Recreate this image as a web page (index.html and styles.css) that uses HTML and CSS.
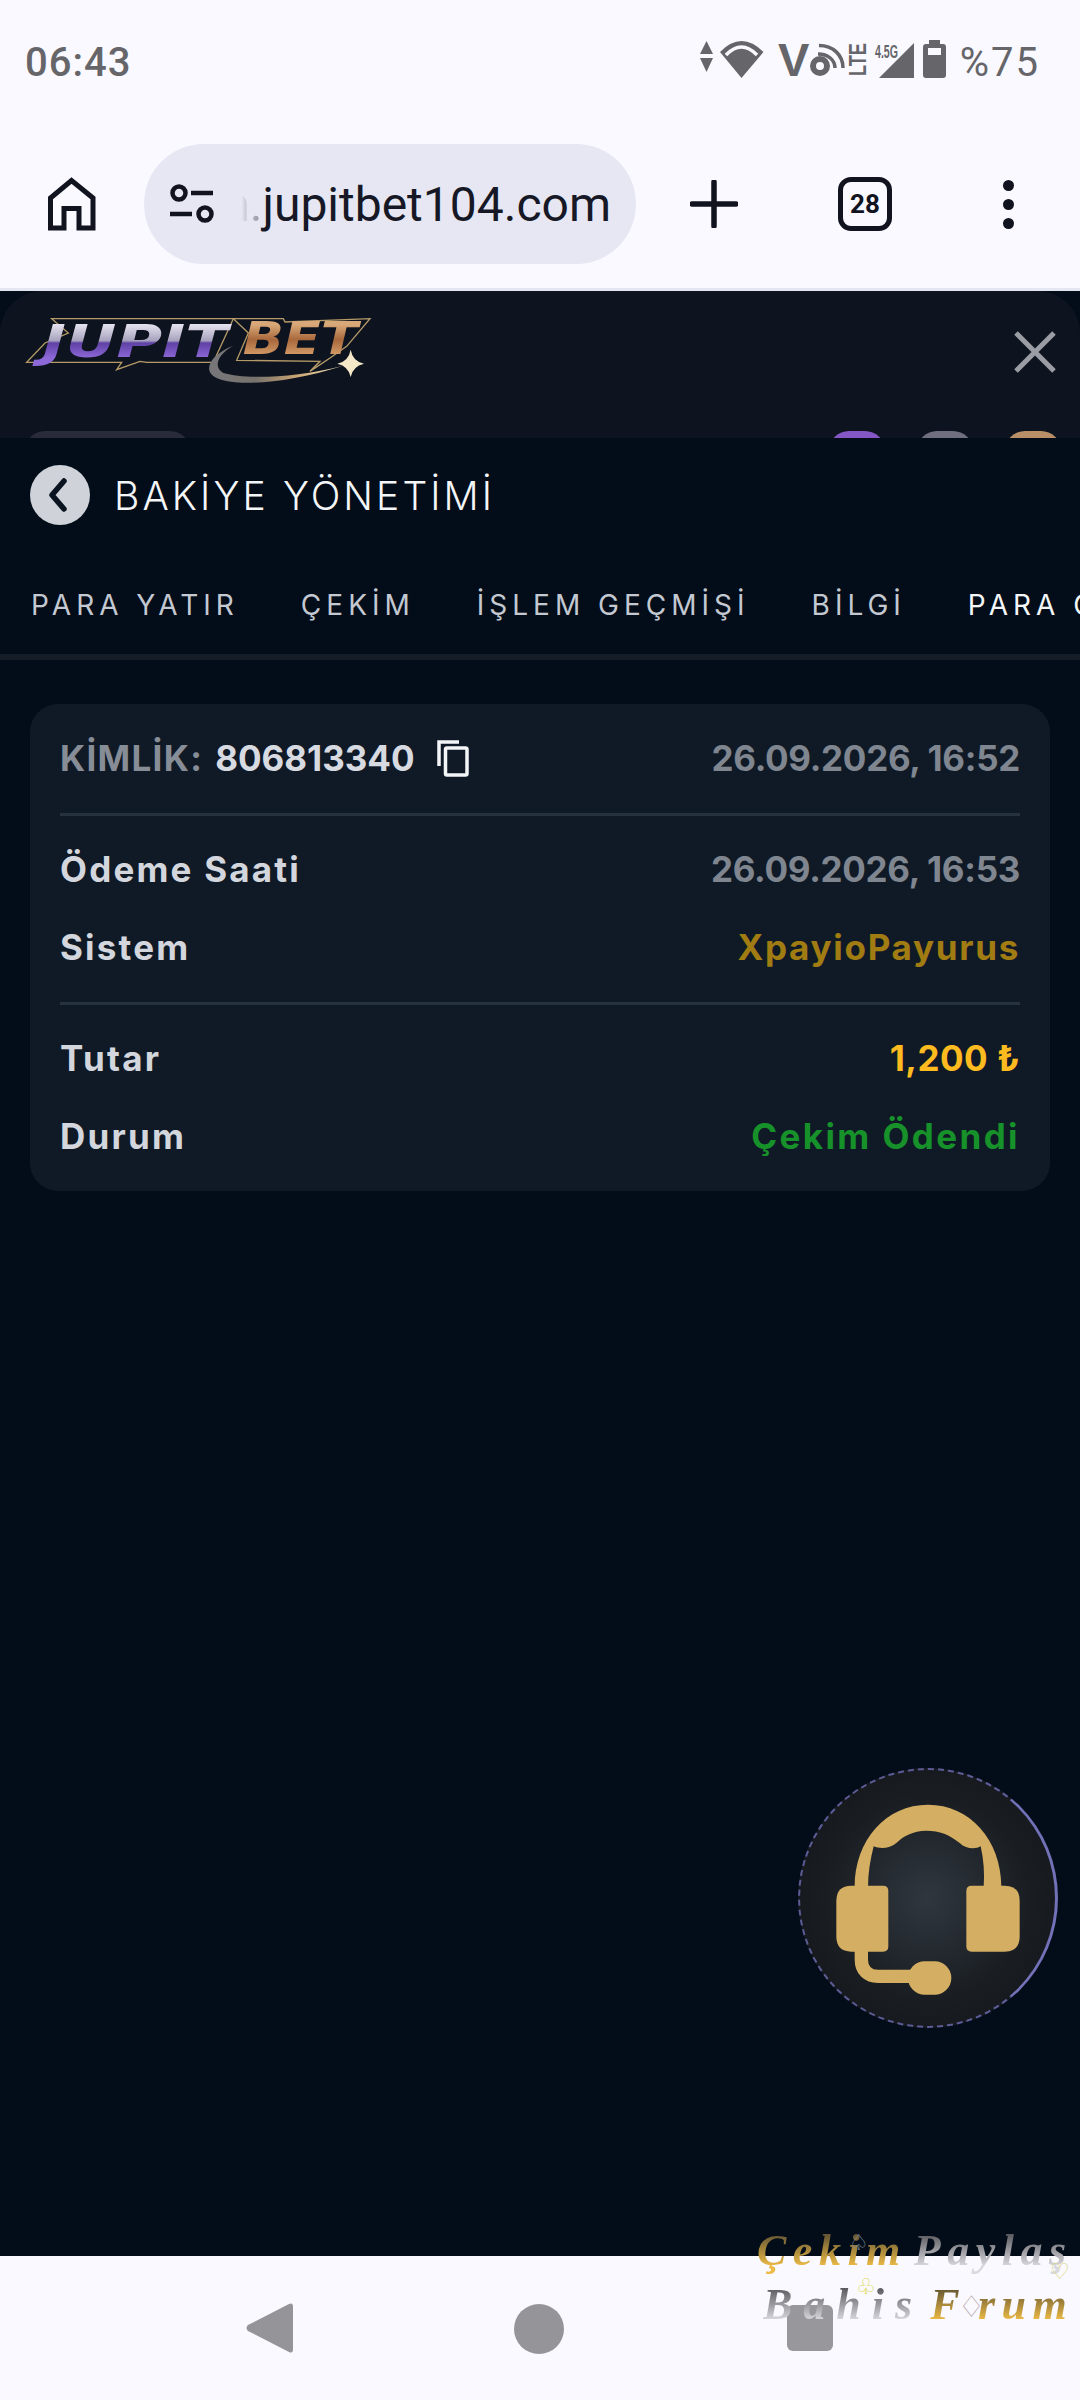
FILE: index.html
```html
<!DOCTYPE html>
<html lang="tr">
<head>
<meta charset="utf-8">
<title>Bakiye Yönetimi</title>
<link rel="stylesheet" href="styles.css">
</head>
<body>

<!-- android status bar -->
<div class="status">
	<span class="time">06:43</span>
	<div class="status-right">
		<svg class="status-icons" width="250" height="46" viewBox="701 36 250 46">
			<polygon points="707.5,41 714,54 701,54"/>
			<polygon points="701,58 714,58 707.5,72"/>
			<path d="M742.5 78L721 52Q742.5 30 764.5 52Z"/>
			<path d="M727 55Q742.5 39 758 55" class="cut"/>
			<text x="779" y="76" class="t-v">V</text>
			<circle cx="821" cy="66" r="7" class="ring"/>
			<path d="M820 45.500C834 45.500 844 55 844 68" class="wave"/>
			<path d="M819 54C829 54 836 60 836 68" class="wave"/>
			<text x="867" y="76" class="t-lte" textLength="33" lengthAdjust="spacingAndGlyphs" transform="rotate(-90 867 76)">LTE</text>
			<text x="876" y="58" class="t-g" textLength="23" lengthAdjust="spacingAndGlyphs">4.5G</text>
			<polygon points="880,78 915,43 915,78"/>
			<path d="M930 44V40H941V44H944Q947 44 947 47V75Q947 78 944 78H927Q924 78 924 75V47Q924 44 927 44Z"/>
			<rect x="929" y="48" width="13" height="7" class="fill-cut"/>
		</svg>
		<span class="batt">%75</span>
	</div>
</div>

<!-- browser toolbar -->
<div class="toolbar">
	<svg class="home" width="48" height="54" viewBox="48 178 48 54">
		<path d="M50.500 229V199L71.500 181.500L93 199V229H79V209.500H64V229Z"/>
	</svg>
	<div class="urlbar">
		<svg class="tune" width="46" height="40" viewBox="169 184 46 40">
			<circle cx="179" cy="193" r="6.500"/>
			<path d="M191 193H213M170 214H192"/>
			<circle cx="205" cy="214" r="6.500"/>
		</svg>
		<span class="url"><span class="url-fade">m.</span>jupitbet104.com</span>
	</div>
	<svg class="plus" width="48" height="48" viewBox="0 0 48 48">
		<path d="M24 2V46M2 24H46"/>
	</svg>
	<div class="tabcount">28</div>
	<div class="dots"><i></i><i></i><i></i></div>
</div>

<div class="page">
	<!-- site header, mostly covered by the panel -->
	<div class="site-head">
		<div class="logo-row">
			<svg class="logo" width="350" height="74" viewBox="72 70 1050 222">
				<defs>
					<linearGradient id="gp" gradientUnits="userSpaceOnUse" x1="0" y1="105" x2="0" y2="205">
						<stop offset="0" stop-color="#e4e1ee"/>
						<stop offset=".48" stop-color="#a7a2bd"/>
						<stop offset=".55" stop-color="#5f42a5"/>
						<stop offset="1" stop-color="#8d68d8"/>
					</linearGradient>
					<linearGradient id="gb" gradientUnits="userSpaceOnUse" x1="0" y1="105" x2="0" y2="195">
						<stop offset="0" stop-color="#d9a878"/>
						<stop offset=".5" stop-color="#a8683c"/>
						<stop offset="1" stop-color="#d29a66"/>
					</linearGradient>
					<linearGradient id="gs" x1="0" y1="0" x2="1" y2="0">
						<stop offset="0" stop-color="#77767a"/>
						<stop offset=".35" stop-color="#77726c"/>
						<stop offset=".65" stop-color="#c9a474"/>
						<stop offset="1" stop-color="#f5e5b8"/>
					</linearGradient>
				</defs>
				<path class="logo-line" d="M155 87H700L640 218H440L420 215L350 240L365 218H80L135 160L205 130Z"/>
				<path class="logo-line" d="M700 87H850L855 97L1110 87L1040 170L990 205L930 245L960 215L710 212L745 130Z"/>
				<text x="128" y="203" class="logo-t" fill="url(#gp)" textLength="555" lengthAdjust="spacingAndGlyphs">JUPIT</text>
				<text x="728" y="193" class="logo-t" fill="url(#gb)" textLength="345" lengthAdjust="spacingAndGlyphs">BET</text>
				<path fill="url(#gs)" d="M700 168C640 190 600 240 650 265C700 290 850 285 1030 228C880 265 740 270 670 250C640 235 650 195 700 168Z"/>
				<path fill="#f5e8c8" d="M1052 180Q1058 215 1092 222Q1058 230 1052 262Q1046 230 1012 222Q1046 215 1052 180Z"/>
			</svg>
			<svg class="close" width="42" height="42" viewBox="0 0 42 42">
				<path d="M2 2L40 40M40 2L2 40"/>
			</svg>
		</div>
		<div class="peek">
			<span class="peek-pill"></span>
			<span class="peek-dots">
				<span class="peek-dot purple"></span>
				<span class="peek-dot grey"></span>
				<span class="peek-dot tan"></span>
			</span>
		</div>
	</div>

	<div class="panel-head">
		<span class="back">
			<svg width="22" height="34" viewBox="0 0 22 34"><path d="M17 3L5 17L17 31"/></svg>
		</span>
		<span class="panel-title">BAKİYE YÖNETİMİ</span>
	</div>

	<div class="tabs">
		<span class="tab">PARA YATIR</span>
		<span class="tab">ÇEKİM</span>
		<span class="tab">İŞLEM GEÇMİŞİ</span>
		<span class="tab">BİLGİ</span>
		<span class="tab active">PARA ÇEKME</span>
	</div>

	<div class="card">
		<div class="row">
			<span class="kimlik">
				<span class="muted">KİMLİK:</span>
				<span class="id">806813340</span>
				<svg class="copy" width="32" height="37" viewBox="436 741 32 37">
					<path d="M438 767V743H458"/>
					<rect x="444.500" y="749" width="21.500" height="27" rx="1.500"/>
				</svg>
			</span>
			<span class="date">26.09.2026, 16:52</span>
		</div>
		<hr>
		<div class="row">
			<span class="label">Ödeme Saati</span>
			<span class="date">26.09.2026, 16:53</span>
		</div>
		<div class="row">
			<span class="label">Sistem</span>
			<span class="system">XpayioPayurus</span>
		</div>
		<hr>
		<div class="row">
			<span class="label">Tutar</span>
			<span class="amount">1,200 ₺</span>
		</div>
		<div class="row">
			<span class="label">Durum</span>
			<span class="paid">Çekim Ödendi</span>
		</div>
	</div>

	<div class="support">
		<svg width="260" height="260" viewBox="55 55 780 780">
			<path d="M225 412C225 270 320 165 445 165C570 165 665 270 665 412H612C615 370 612 330 603 290C590 298 560 300 540 280C510 255 480 243 440 243C400 243 370 260 350 280C330 298 300 298 282 290C272 330 265 370 265 412Z"/>
			<path d="M215 408H310Q326 408 326 424V590Q326 606 310 606H215Q170 606 170 560V454Q170 408 215 408Z"/>
			<path d="M576 408H675Q720 408 720 454V560Q720 606 675 606H576Q560 606 560 590V424Q560 408 576 408Z"/>
			<path class="mic-arm" d="M245 600V630C245 662 265 680 295 680H400"/>
			<rect x="385" y="635" width="130" height="100" rx="50"/>
		</svg>
	</div>
</div>

<!-- android nav bar -->
<div class="navbar">
	<svg class="nav-back" width="48" height="56" viewBox="0 0 48 56">
		<path d="M44 4Q48 2 48 7V49Q48 54 44 52L3 31Q0 28 3 25Z"/>
	</svg>
	<span class="nav-home"></span>
	<span class="nav-recent"></span>
</div>

<!-- forum watermark over the corner -->
<div class="mark">
	<div class="mark-line first"><span class="gold">Çekim</span><span class="silver">Paylaş</span></div>
	<div class="mark-line second"><span class="silver">Bahis</span><span class="gold">F</span><span class="suit diamond">♢</span><span class="gold">rum</span></div>
	<span class="suit spade">♤</span>
	<span class="suit heart">♡</span>
	<span class="suit club">♧</span>
</div>

</body>
</html>
```

FILE: styles.css
```css
body {
	margin: 0;
	width: 1080px;
	height: 2400px;
	position: relative;
	overflow: hidden;
	display: flex;
	flex-direction: column;
	background: #f9f9ff;
	font-family: Inter, "Liberation Sans", sans-serif;
}
/* status bar */
.status {
	height: 120px;
	flex: none;
	padding: 0 40px 0 25px;
	box-sizing: border-box;
	display: flex;
	justify-content: space-between;
	align-items: flex-start;
	color: #66666a;
	font-family: Roboto, sans-serif;
	font-weight: 500;
	font-size: 40px;
}
.time {
	margin-top: 39px;
	line-height: 47px;
	letter-spacing: 1px;
}
.status-right {
	display: flex;
	margin-top: 36px;
}
.status-icons {
	fill: #66666a;
}
.status-icons .cut {
	fill: none;
	stroke: #f9f9ff;
	stroke-width: 3.5;
}
.status-icons .fill-cut {
	fill: #f9f9ff;
}
.status-icons .ring {
	fill: none;
	stroke: #66666a;
	stroke-width: 6;
}
.status-icons .wave {
	fill: none;
	stroke: #66666a;
	stroke-width: 3.5;
}
.t-v {
	font: 700 47px "Liberation Sans", sans-serif;
}
.t-lte {
	font: 700 23px "Liberation Sans", sans-serif;
}
.t-g {
	font: 700 19px "Liberation Sans", sans-serif;
}
.batt {
	margin: 4px 0 0 10px;
	line-height: 46px;
	letter-spacing: 2px;
	font-weight: 400;
}
/* browser toolbar */
.toolbar {
	height: 171px;
	flex: none;
	box-sizing: border-box;
	border-bottom: 3px solid #e4e6f2;
	padding-left: 48px;
	display: flex;
	align-items: center;
}
.home {
	fill: none;
	stroke: #11131f;
	stroke-width: 5;
}
.urlbar {
	width: 492px;
	height: 120px;
	margin-left: 48px;
	border-radius: 60px;
	background: #e6e7f3;
	display: flex;
	align-items: center;
	position: relative;
	overflow: hidden;
}
.tune {
	margin-left: 25px;
	flex: none;
	fill: none;
	stroke: #11131f;
	stroke-width: 4.500;
}
.url {
	position: absolute;
	right: 25px;
	white-space: nowrap;
	font-family: Roboto, sans-serif;
	font-size: 48px;
	color: #161826;
}
.url-fade {
	background-image: linear-gradient(90deg, transparent 62%, #c4c5d2 72%, #8d8e9e 100%);
	-webkit-background-clip: text;
	background-clip: text;
	color: transparent;
}
.plus {
	margin-left: 54px;
	fill: none;
	stroke: #11131f;
	stroke-width: 5.500;
	stroke-linecap: round;
}
.tabcount {
	width: 54px;
	height: 54px;
	margin-left: 100px;
	box-sizing: border-box;
	border: 5px solid #11131f;
	border-radius: 13px;
	display: flex;
	align-items: center;
	justify-content: center;
	font-family: Roboto, sans-serif;
	font-weight: 700;
	font-size: 26px;
	color: #11131f;
}
.dots {
	margin-left: 111px;
	display: flex;
	flex-direction: column;
	gap: 8px;
}
.dots i {
	display: block;
	width: 11px;
	height: 11px;
	border-radius: 50%;
	background: #11131f;
}
/* page */
.page {
	flex: 1;
	position: relative;
	background: #020d19;
}
.site-head {
	height: 147px;
	box-sizing: border-box;
	border-radius: 42px 42px 0 0;
	background: #0e141f;
	display: flex;
	flex-direction: column;
	justify-content: space-between;
	overflow: hidden;
}
.logo-row {
	display: flex;
	justify-content: space-between;
	padding: 22px 24px 0 24px;
}
.logo-line {
	fill: none;
	stroke: #b59a68;
	stroke-width: 4;
}
.logo-t {
	font: italic 700 132px "DejaVu Sans", sans-serif;
}
.close {
	margin-top: 18px;
	fill: none;
	stroke: #9a9da4;
	stroke-width: 5;
}
.peek {
	height: 7px;
	overflow: hidden;
	display: flex;
	justify-content: space-between;
	padding: 0 19px 0 25px;
}
.peek-pill {
	width: 165px;
	height: 40px;
	border-radius: 20px;
	background: #2a2b38;
}
.peek-dots {
	display: flex;
	gap: 32px;
}
.peek-dot {
	width: 56px;
	height: 56px;
	border-radius: 20px;
}
.purple { background: #8457c4; }
.grey { background: #6f6f80; }
.tan { background: #b98f68; }
.panel-head {
	height: 114px;
	display: flex;
	align-items: center;
	padding-left: 30px;
}
.back {
	width: 60px;
	height: 60px;
	border-radius: 50%;
	background: #cfd2d8;
	display: flex;
	align-items: center;
	justify-content: center;
}
.back svg {
	margin-right: 5px;
	fill: none;
	stroke: #0a1320;
	stroke-width: 5.500;
	stroke-linecap: round;
	stroke-linejoin: round;
}
.panel-title {
	margin-left: 24px;
	font-size: 39px;
	letter-spacing: 3.100px;
	font-weight: 300;
	color: #f4f5f7;
}
.tabs {
	height: 108px;
	box-sizing: border-box;
	border-bottom: 6px solid #141c28;
	display: flex;
	overflow: hidden;
}
.tab {
	flex: none;
	height: 102px;
	box-sizing: border-box;
	padding: 4px 31px 0;
	display: flex;
	align-items: center;
	font-size: 28px;
	font-weight: 400;
	letter-spacing: 5px;
	color: #c3c8d1;
}
.tab.active {
	height: 108px;
	padding-bottom: 0;
	border-bottom: 6px solid #7a4fc0;
	color: #f4f5f7;
}
/* card */
.card {
	margin: 44px 30px 0;
	padding: 15px 30px 16px;
	border-radius: 28px;
	background: #101a26;
	font-size: 35px;
	font-weight: 700;
}
.card hr {
	height: 3px;
	margin: 16px 0 14px;
	border: 0;
	background: #273240;
}
.row {
	height: 78px;
	display: flex;
	align-items: center;
	justify-content: space-between;
}
.kimlik {
	display: flex;
	align-items: center;
}
.muted {
	letter-spacing: 1.300px;
	color: #878d97;
}
.id {
	margin-left: 12px;
	color: #d7dae0;
}
.copy {
	margin-left: 22px;
	fill: none;
	stroke: #f4f5f7;
	stroke-width: 3.500;
}
.date {
	letter-spacing: -.3px;
	color: #7f8690;
}
.label {
	letter-spacing: 2.200px;
	color: #d3d6dd;
}
.system {
	letter-spacing: 1.700px;
	color: #a07c12;
}
.amount {
	letter-spacing: .5px;
	color: #fdbb1f;
}
.paid {
	letter-spacing: 2.400px;
	color: #17912a;
}
/* support button */
.support {
	position: absolute;
	left: 798px;
	top: 1477px;
	width: 260px;
	height: 260px;
	box-sizing: border-box;
	border-radius: 50%;
	border: 2px dashed #5e5c96;
	border-right: 3px solid #7371b8;
	background: radial-gradient(circle, #2f373e 0%, #1a1e23 55%, #101216 100%);
	display: flex;
	align-items: center;
	justify-content: center;
}
.support svg {
	flex: none;
	fill: #d4ae62;
}
.support .mic-arm {
	fill: none;
	stroke: #d4ae62;
	stroke-width: 40;
}
/* nav bar */
.navbar {
	height: 144px;
	flex: none;
	position: relative;
	background: #f9f9ff;
}
.nav-back {
	position: absolute;
	left: 245px;
	top: 44px;
	fill: #949499;
}
.nav-home {
	position: absolute;
	left: 514px;
	top: 48px;
	width: 50px;
	height: 50px;
	border-radius: 50%;
	background: #949499;
}
.nav-recent {
	position: absolute;
	left: 787px;
	top: 49px;
	width: 46px;
	height: 46px;
	border-radius: 6px;
	background: #97979c;
}
/* watermark */
.mark {
	position: absolute;
	left: 757px;
	top: 2226px;
	width: 323px;
	height: 110px;
	font-family: "Liberation Serif", serif;
	font-style: italic;
	font-weight: 700;
	font-size: 44px;
	line-height: 50px;
	letter-spacing: 6.500px;
	white-space: nowrap;
}
.mark-line {
	display: flex;
}
.mark-line.second {
	margin: 4px 0 0 6px;
}
.first .silver {
	margin-left: 7px;
}
.second .silver {
	letter-spacing: 11px;
}
.second .silver + .gold {
	margin-left: 7px;
}
.gold, .silver {
	-webkit-background-clip: text;
	background-clip: text;
	color: transparent;
}
.gold {
	background-image: linear-gradient(#5f5132 15%, #edbb45 80%);
}
.silver {
	background-image: linear-gradient(#57575c 15%, #d8d8de 80%);
}
.suit {
	font-family: "DejaVu Sans", sans-serif;
	font-style: normal;
	font-weight: 400;
	letter-spacing: 0;
	line-height: 1;
}
.spade {
	position: absolute;
	left: 92px;
	top: 6px;
	font-size: 22px;
	color: #7f8a98;
}
.heart {
	position: absolute;
	left: 293px;
	top: 35px;
	font-size: 22px;
	color: #d8cf6a;
}
.club {
	position: absolute;
	left: 99px;
	top: 50px;
	font-size: 22px;
	color: #e0d850;
}
.diamond {
	font-size: 30px;
	margin: 12px -7px 0 -8px;
	color: #b9a9ac;
}
```
